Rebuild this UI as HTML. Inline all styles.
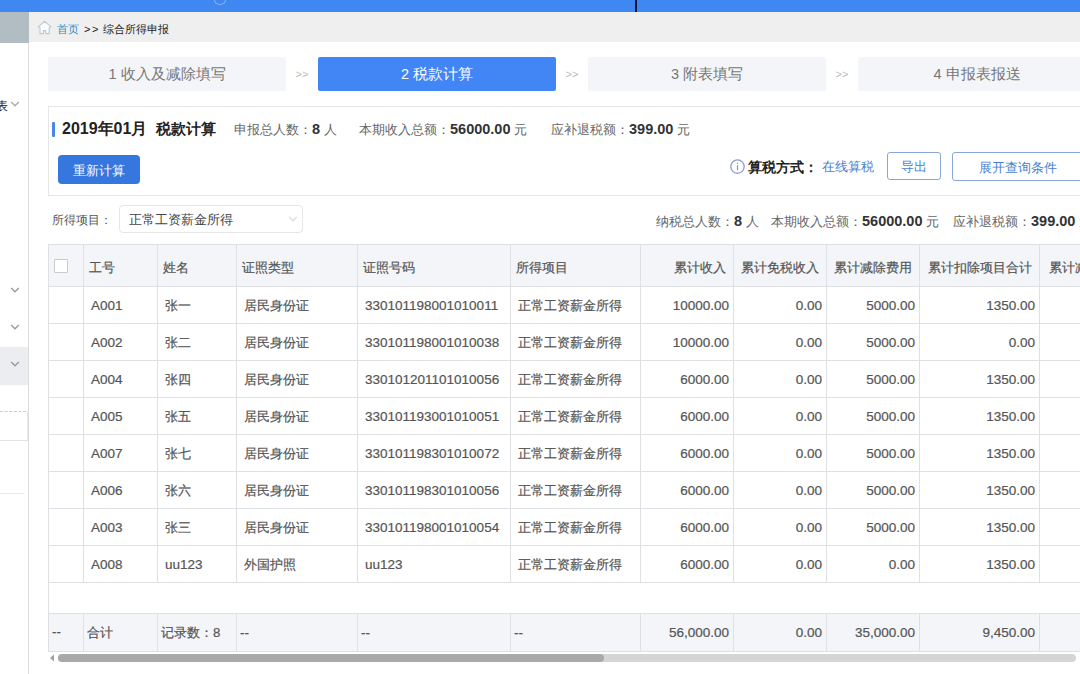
<!DOCTYPE html>
<html><head><meta charset="utf-8">
<style>
*{box-sizing:border-box;margin:0;padding:0}
html,body{width:1080px;height:674px;overflow:hidden;background:#fff;font-family:"Liberation Sans",sans-serif;color:#555}
.a{position:absolute}
.t{position:absolute;white-space:nowrap}
.cell{position:absolute;white-space:nowrap;overflow:hidden;font-size:13.2px;color:#555;-webkit-text-stroke:0.2px #555}
.vl{position:absolute;width:1px;background:#dfe0e3}
.hl{position:absolute;height:1px;background:#dfe0e3}
</style></head><body>

<div class="a" style="left:0;top:0;width:1080px;height:12px;background:#3f87f1"></div>
<div class="a" style="left:635px;top:0;width:2px;height:12px;background:#0a1640"></div>
<div class="a" style="left:214px;top:-5px;width:12px;height:10px;border-radius:50%;border:1.5px solid #cfe0fb;opacity:.5"></div>
<div class="a" style="left:0;top:12px;width:29px;height:31px;background:#b2bdc3"></div>
<div class="a" style="left:29px;top:12px;width:1051px;height:30px;background:#efefef"></div>
<div class="a" style="left:28px;top:43px;width:1px;height:631px;background:#dcdcdc"></div>
<svg class="a" style="left:37px;top:20px" width="15" height="15" viewBox="0 0 15 15"><path d="M7.6 1.3 L14 6.8 L12.2 7.4 V13.6 H8.8 V10.6 H6.4 V13.6 H3 V7.4 L1.2 6.8 Z" fill="#fbfdff" stroke="#bcc7d2" stroke-width="1.1" stroke-linejoin="round"/></svg>
<div class="t" style="left:57px;top:22px;font-size:11px;line-height:14px;color:#2f8cc4">首页</div>
<div class="t" style="left:84px;top:22px;font-size:11px;line-height:14px;color:#222;letter-spacing:1.5px">&gt;&gt;</div>
<div class="t" style="left:103px;top:22px;font-size:11px;line-height:14px;color:#222">综合所得申报</div>
<div class="t" style="left:-4px;top:99px;font-size:12px;line-height:14px;color:#222">表</div>
<svg class="a" style="left:10px;top:101px" width="10" height="6" viewBox="0 0 10 6"><path d="M1.2 1 L5 4.8 L8.8 1" fill="none" stroke="#aaa" stroke-width="1.3"/></svg>
<div class="a" style="left:0;top:347px;width:28px;height:38px;background:#ebedf0"></div>
<svg class="a" style="left:10px;top:287px" width="10" height="6" viewBox="0 0 10 6"><path d="M1.2 1 L5 4.8 L8.8 1" fill="none" stroke="#999" stroke-width="1.3"/></svg>
<svg class="a" style="left:10px;top:324px" width="10" height="6" viewBox="0 0 10 6"><path d="M1.2 1 L5 4.8 L8.8 1" fill="none" stroke="#999" stroke-width="1.3"/></svg>
<svg class="a" style="left:10px;top:361px" width="10" height="6" viewBox="0 0 10 6"><path d="M1.2 1 L5 4.8 L8.8 1" fill="none" stroke="#999" stroke-width="1.3"/></svg>
<div class="a" style="left:0;top:411px;width:26px;height:0;border-top:1px dashed #ccc"></div>
<div class="a" style="left:0;top:440px;width:28px;height:1px;background:#e2e2e2"></div>
<div class="a" style="left:27px;top:411px;width:1px;height:30px;background:#e8e8e8"></div>
<div class="a" style="left:0;top:493px;width:24px;height:1px;background:#e8e8e8"></div>
<div class="t" style="left:48px;top:57px;width:238px;height:34px;background:#f3f5f8;border-radius:2px;color:#777;font-size:14.5px;line-height:34px;text-align:center">1 收入及减除填写</div>
<div class="t" style="left:286px;top:57px;width:32px;height:34px;color:#bbb;font-size:11px;line-height:34px;text-align:center">&gt;&gt;</div>
<div class="t" style="left:318px;top:57px;width:238px;height:34px;background:#4285f4;border-radius:2px;color:#fff;font-size:14.5px;line-height:34px;text-align:center">2 税款计算</div>
<div class="t" style="left:556px;top:57px;width:32px;height:34px;color:#bbb;font-size:11px;line-height:34px;text-align:center">&gt;&gt;</div>
<div class="t" style="left:588px;top:57px;width:238px;height:34px;background:#f3f5f8;border-radius:2px;color:#777;font-size:14.5px;line-height:34px;text-align:center">3 附表填写</div>
<div class="t" style="left:826px;top:57px;width:32px;height:34px;color:#bbb;font-size:11px;line-height:34px;text-align:center">&gt;&gt;</div>
<div class="t" style="left:858px;top:57px;width:238px;height:34px;background:#f3f5f8;border-radius:2px;color:#777;font-size:14.5px;line-height:34px;text-align:center">4 申报表报送</div>
<div class="a" style="left:48px;top:106px;width:1100px;height:90px;border:1px solid #e6e6e6;background:#fff"></div>
<div class="a" style="left:52px;top:122px;width:3px;height:15px;background:#4a86e8;border-radius:1px"></div>
<div class="t" style="left:62px;top:119px;font-size:16px;line-height:20px;font-weight:bold;color:#222">2019年01月<span style="margin-left:9px;font-size:15px">税款计算</span></div>
<div class="t" style="left:234px;top:121px;font-size:13px;line-height:16px;color:#666">申报总人数：<b style="font-size:14.5px;color:#333">8</b> 人</div>
<div class="t" style="left:359px;top:121px;font-size:13px;line-height:16px;color:#666">本期收入总额：<b style="font-size:14.5px;color:#333">56000.00</b> 元</div>
<div class="t" style="left:551px;top:121px;font-size:13px;line-height:16px;color:#666">应补退税额：<b style="font-size:14.5px;color:#333">399.00</b> 元</div>
<div class="t" style="left:58px;top:155px;width:82px;height:29px;background:#3576df;border-radius:4px;color:#fff;font-size:13px;line-height:31px;text-align:center">重新计算</div>
<svg class="a" style="left:730px;top:159px" width="15" height="15" viewBox="0 0 15 15"><circle cx="7.5" cy="7.6" r="6.7" fill="none" stroke="#889dc6" stroke-width="1.3"/><rect x="6.9" y="6.2" width="1.2" height="5" fill="#7f93d0"/><rect x="6.9" y="3.8" width="1.2" height="1.3" fill="#7f93d0"/></svg>
<div class="t" style="left:748px;top:158px;font-size:14px;line-height:18px;font-weight:bold;color:#222">算税方式：</div>
<div class="t" style="left:822px;top:159px;font-size:12.5px;line-height:16px;color:#4a7fd0">在线算税</div>
<div class="t" style="left:887px;top:152px;width:54px;height:28px;border:1px solid #8aa6d8;border-radius:3px;color:#4a7fd0;font-size:13px;line-height:28px;text-align:center">导出</div>
<div class="t" style="left:952px;top:152px;width:160px;height:29px;border:1px solid #8aa6d8;border-radius:3px;color:#4a7fd0;font-size:13px;line-height:29px;padding-left:26px">展开查询条件</div>
<div class="t" style="left:52px;top:212px;font-size:12px;line-height:16px;color:#555">所得项目：</div>
<div class="t" style="left:119px;top:205px;width:184px;height:28px;border:1px solid #e6e6e6;border-radius:4px;color:#444;font-size:13px;line-height:28px;padding-left:9px">正常工资薪金所得</div>
<svg class="a" style="left:288px;top:216px" width="10" height="6" viewBox="0 0 10 6"><path d="M1.2 1 L5 4.8 L8.8 1" fill="none" stroke="#ddd" stroke-width="1.3"/></svg>
<div class="t" style="left:656px;top:213px;font-size:13px;line-height:16px;color:#666">纳税总人数：<b style="font-size:14.5px;color:#333">8</b> 人</div>
<div class="t" style="left:771px;top:213px;font-size:13px;line-height:16px;color:#666">本期收入总额：<b style="font-size:14.5px;color:#333">56000.00</b> 元</div>
<div class="t" style="left:953px;top:213px;font-size:13px;line-height:16px;color:#666">应补退税额：<b style="font-size:14.5px;color:#333">399.00</b> 元</div>
<div class="a" style="left:48px;top:244px;width:1040px;height:42px;background:#f3f5f9"></div>
<div class="a" style="left:48px;top:613px;width:1040px;height:38px;background:#f3f5f9"></div>
<div class="hl" style="left:48px;top:244px;width:1040px"></div>
<div class="hl" style="left:48px;top:286px;width:1040px"></div>
<div class="hl" style="left:48px;top:323px;width:1040px"></div>
<div class="hl" style="left:48px;top:360px;width:1040px"></div>
<div class="hl" style="left:48px;top:397px;width:1040px"></div>
<div class="hl" style="left:48px;top:434px;width:1040px"></div>
<div class="hl" style="left:48px;top:471px;width:1040px"></div>
<div class="hl" style="left:48px;top:508px;width:1040px"></div>
<div class="hl" style="left:48px;top:545px;width:1040px"></div>
<div class="hl" style="left:48px;top:582px;width:1040px"></div>
<div class="hl" style="left:48px;top:613px;width:1040px"></div>
<div class="hl" style="left:48px;top:651px;width:1040px"></div>
<div class="vl" style="left:48px;top:244px;height:338px"></div>
<div class="vl" style="left:48px;top:613px;height:38px"></div>
<div class="vl" style="left:83px;top:244px;height:338px"></div>
<div class="vl" style="left:83px;top:613px;height:38px"></div>
<div class="vl" style="left:157px;top:244px;height:338px"></div>
<div class="vl" style="left:157px;top:613px;height:38px"></div>
<div class="vl" style="left:236px;top:244px;height:338px"></div>
<div class="vl" style="left:236px;top:613px;height:38px"></div>
<div class="vl" style="left:357px;top:244px;height:338px"></div>
<div class="vl" style="left:357px;top:613px;height:38px"></div>
<div class="vl" style="left:510px;top:244px;height:338px"></div>
<div class="vl" style="left:510px;top:613px;height:38px"></div>
<div class="vl" style="left:640px;top:244px;height:338px"></div>
<div class="vl" style="left:640px;top:613px;height:38px"></div>
<div class="vl" style="left:733px;top:244px;height:338px"></div>
<div class="vl" style="left:733px;top:613px;height:38px"></div>
<div class="vl" style="left:826px;top:244px;height:338px"></div>
<div class="vl" style="left:826px;top:613px;height:38px"></div>
<div class="vl" style="left:919px;top:244px;height:338px"></div>
<div class="vl" style="left:919px;top:613px;height:38px"></div>
<div class="vl" style="left:1039px;top:244px;height:338px"></div>
<div class="vl" style="left:1039px;top:613px;height:38px"></div>
<div class="a" style="left:54px;top:259px;width:14px;height:14px;border:1.5px solid #cbcbcb;background:#fff;border-radius:1px"></div>
<div class="cell" style="left:83px;top:247px;width:74px;height:42px;line-height:42px;padding-left:6px;font-size:13.2px">工号</div>
<div class="cell" style="left:157px;top:247px;width:79px;height:42px;line-height:42px;padding-left:6px;font-size:13.2px">姓名</div>
<div class="cell" style="left:236px;top:247px;width:121px;height:42px;line-height:42px;padding-left:6px;font-size:13.2px">证照类型</div>
<div class="cell" style="left:357px;top:247px;width:153px;height:42px;line-height:42px;padding-left:6px;font-size:13.2px">证照号码</div>
<div class="cell" style="left:510px;top:247px;width:130px;height:42px;line-height:42px;padding-left:6px;font-size:13.2px">所得项目</div>
<div class="cell" style="left:640px;top:247px;width:93px;height:42px;line-height:42px;text-align:right;padding-right:7px;font-size:13.2px">累计收入</div>
<div class="cell" style="left:733px;top:247px;width:93px;height:42px;line-height:42px;text-align:right;padding-right:7px;font-size:13.2px">累计免税收入</div>
<div class="cell" style="left:826px;top:247px;width:93px;height:42px;line-height:42px;text-align:right;padding-right:7px;font-size:13.2px">累计减除费用</div>
<div class="cell" style="left:919px;top:247px;width:120px;height:42px;line-height:42px;text-align:right;padding-right:7px;font-size:13.2px">累计扣除项目合计</div>
<div class="cell" style="left:1039px;top:247px;width:121px;height:42px;line-height:42px;padding-left:6px;font-size:13.2px">&nbsp;累计减除</div>
<div class="cell" style="left:83px;top:287px;width:74px;height:37px;line-height:37px;padding-left:8px;font-size:13.5px">A001</div>
<div class="cell" style="left:157px;top:287px;width:79px;height:37px;line-height:37px;padding-left:8px;font-size:13.2px">张一</div>
<div class="cell" style="left:236px;top:287px;width:121px;height:37px;line-height:37px;padding-left:8px;font-size:13.2px">居民身份证</div>
<div class="cell" style="left:357px;top:287px;width:153px;height:37px;line-height:37px;padding-left:8px;font-size:13.5px">330101198001010011</div>
<div class="cell" style="left:510px;top:287px;width:130px;height:37px;line-height:37px;padding-left:8px;font-size:13.2px">正常工资薪金所得</div>
<div class="cell" style="left:640px;top:287px;width:93px;height:37px;line-height:37px;text-align:right;padding-right:4px;font-size:13.5px">10000.00</div>
<div class="cell" style="left:733px;top:287px;width:93px;height:37px;line-height:37px;text-align:right;padding-right:4px;font-size:13.5px">0.00</div>
<div class="cell" style="left:826px;top:287px;width:93px;height:37px;line-height:37px;text-align:right;padding-right:4px;font-size:13.5px">5000.00</div>
<div class="cell" style="left:919px;top:287px;width:120px;height:37px;line-height:37px;text-align:right;padding-right:4px;font-size:13.5px">1350.00</div>
<div class="cell" style="left:83px;top:324px;width:74px;height:37px;line-height:37px;padding-left:8px;font-size:13.5px">A002</div>
<div class="cell" style="left:157px;top:324px;width:79px;height:37px;line-height:37px;padding-left:8px;font-size:13.2px">张二</div>
<div class="cell" style="left:236px;top:324px;width:121px;height:37px;line-height:37px;padding-left:8px;font-size:13.2px">居民身份证</div>
<div class="cell" style="left:357px;top:324px;width:153px;height:37px;line-height:37px;padding-left:8px;font-size:13.5px">330101198001010038</div>
<div class="cell" style="left:510px;top:324px;width:130px;height:37px;line-height:37px;padding-left:8px;font-size:13.2px">正常工资薪金所得</div>
<div class="cell" style="left:640px;top:324px;width:93px;height:37px;line-height:37px;text-align:right;padding-right:4px;font-size:13.5px">10000.00</div>
<div class="cell" style="left:733px;top:324px;width:93px;height:37px;line-height:37px;text-align:right;padding-right:4px;font-size:13.5px">0.00</div>
<div class="cell" style="left:826px;top:324px;width:93px;height:37px;line-height:37px;text-align:right;padding-right:4px;font-size:13.5px">5000.00</div>
<div class="cell" style="left:919px;top:324px;width:120px;height:37px;line-height:37px;text-align:right;padding-right:4px;font-size:13.5px">0.00</div>
<div class="cell" style="left:83px;top:361px;width:74px;height:37px;line-height:37px;padding-left:8px;font-size:13.5px">A004</div>
<div class="cell" style="left:157px;top:361px;width:79px;height:37px;line-height:37px;padding-left:8px;font-size:13.2px">张四</div>
<div class="cell" style="left:236px;top:361px;width:121px;height:37px;line-height:37px;padding-left:8px;font-size:13.2px">居民身份证</div>
<div class="cell" style="left:357px;top:361px;width:153px;height:37px;line-height:37px;padding-left:8px;font-size:13.5px">330101201101010056</div>
<div class="cell" style="left:510px;top:361px;width:130px;height:37px;line-height:37px;padding-left:8px;font-size:13.2px">正常工资薪金所得</div>
<div class="cell" style="left:640px;top:361px;width:93px;height:37px;line-height:37px;text-align:right;padding-right:4px;font-size:13.5px">6000.00</div>
<div class="cell" style="left:733px;top:361px;width:93px;height:37px;line-height:37px;text-align:right;padding-right:4px;font-size:13.5px">0.00</div>
<div class="cell" style="left:826px;top:361px;width:93px;height:37px;line-height:37px;text-align:right;padding-right:4px;font-size:13.5px">5000.00</div>
<div class="cell" style="left:919px;top:361px;width:120px;height:37px;line-height:37px;text-align:right;padding-right:4px;font-size:13.5px">1350.00</div>
<div class="cell" style="left:83px;top:398px;width:74px;height:37px;line-height:37px;padding-left:8px;font-size:13.5px">A005</div>
<div class="cell" style="left:157px;top:398px;width:79px;height:37px;line-height:37px;padding-left:8px;font-size:13.2px">张五</div>
<div class="cell" style="left:236px;top:398px;width:121px;height:37px;line-height:37px;padding-left:8px;font-size:13.2px">居民身份证</div>
<div class="cell" style="left:357px;top:398px;width:153px;height:37px;line-height:37px;padding-left:8px;font-size:13.5px">330101193001010051</div>
<div class="cell" style="left:510px;top:398px;width:130px;height:37px;line-height:37px;padding-left:8px;font-size:13.2px">正常工资薪金所得</div>
<div class="cell" style="left:640px;top:398px;width:93px;height:37px;line-height:37px;text-align:right;padding-right:4px;font-size:13.5px">6000.00</div>
<div class="cell" style="left:733px;top:398px;width:93px;height:37px;line-height:37px;text-align:right;padding-right:4px;font-size:13.5px">0.00</div>
<div class="cell" style="left:826px;top:398px;width:93px;height:37px;line-height:37px;text-align:right;padding-right:4px;font-size:13.5px">5000.00</div>
<div class="cell" style="left:919px;top:398px;width:120px;height:37px;line-height:37px;text-align:right;padding-right:4px;font-size:13.5px">1350.00</div>
<div class="cell" style="left:83px;top:435px;width:74px;height:37px;line-height:37px;padding-left:8px;font-size:13.5px">A007</div>
<div class="cell" style="left:157px;top:435px;width:79px;height:37px;line-height:37px;padding-left:8px;font-size:13.2px">张七</div>
<div class="cell" style="left:236px;top:435px;width:121px;height:37px;line-height:37px;padding-left:8px;font-size:13.2px">居民身份证</div>
<div class="cell" style="left:357px;top:435px;width:153px;height:37px;line-height:37px;padding-left:8px;font-size:13.5px">330101198301010072</div>
<div class="cell" style="left:510px;top:435px;width:130px;height:37px;line-height:37px;padding-left:8px;font-size:13.2px">正常工资薪金所得</div>
<div class="cell" style="left:640px;top:435px;width:93px;height:37px;line-height:37px;text-align:right;padding-right:4px;font-size:13.5px">6000.00</div>
<div class="cell" style="left:733px;top:435px;width:93px;height:37px;line-height:37px;text-align:right;padding-right:4px;font-size:13.5px">0.00</div>
<div class="cell" style="left:826px;top:435px;width:93px;height:37px;line-height:37px;text-align:right;padding-right:4px;font-size:13.5px">5000.00</div>
<div class="cell" style="left:919px;top:435px;width:120px;height:37px;line-height:37px;text-align:right;padding-right:4px;font-size:13.5px">1350.00</div>
<div class="cell" style="left:83px;top:472px;width:74px;height:37px;line-height:37px;padding-left:8px;font-size:13.5px">A006</div>
<div class="cell" style="left:157px;top:472px;width:79px;height:37px;line-height:37px;padding-left:8px;font-size:13.2px">张六</div>
<div class="cell" style="left:236px;top:472px;width:121px;height:37px;line-height:37px;padding-left:8px;font-size:13.2px">居民身份证</div>
<div class="cell" style="left:357px;top:472px;width:153px;height:37px;line-height:37px;padding-left:8px;font-size:13.5px">330101198301010056</div>
<div class="cell" style="left:510px;top:472px;width:130px;height:37px;line-height:37px;padding-left:8px;font-size:13.2px">正常工资薪金所得</div>
<div class="cell" style="left:640px;top:472px;width:93px;height:37px;line-height:37px;text-align:right;padding-right:4px;font-size:13.5px">6000.00</div>
<div class="cell" style="left:733px;top:472px;width:93px;height:37px;line-height:37px;text-align:right;padding-right:4px;font-size:13.5px">0.00</div>
<div class="cell" style="left:826px;top:472px;width:93px;height:37px;line-height:37px;text-align:right;padding-right:4px;font-size:13.5px">5000.00</div>
<div class="cell" style="left:919px;top:472px;width:120px;height:37px;line-height:37px;text-align:right;padding-right:4px;font-size:13.5px">1350.00</div>
<div class="cell" style="left:83px;top:509px;width:74px;height:37px;line-height:37px;padding-left:8px;font-size:13.5px">A003</div>
<div class="cell" style="left:157px;top:509px;width:79px;height:37px;line-height:37px;padding-left:8px;font-size:13.2px">张三</div>
<div class="cell" style="left:236px;top:509px;width:121px;height:37px;line-height:37px;padding-left:8px;font-size:13.2px">居民身份证</div>
<div class="cell" style="left:357px;top:509px;width:153px;height:37px;line-height:37px;padding-left:8px;font-size:13.5px">330101198001010054</div>
<div class="cell" style="left:510px;top:509px;width:130px;height:37px;line-height:37px;padding-left:8px;font-size:13.2px">正常工资薪金所得</div>
<div class="cell" style="left:640px;top:509px;width:93px;height:37px;line-height:37px;text-align:right;padding-right:4px;font-size:13.5px">6000.00</div>
<div class="cell" style="left:733px;top:509px;width:93px;height:37px;line-height:37px;text-align:right;padding-right:4px;font-size:13.5px">0.00</div>
<div class="cell" style="left:826px;top:509px;width:93px;height:37px;line-height:37px;text-align:right;padding-right:4px;font-size:13.5px">5000.00</div>
<div class="cell" style="left:919px;top:509px;width:120px;height:37px;line-height:37px;text-align:right;padding-right:4px;font-size:13.5px">1350.00</div>
<div class="cell" style="left:83px;top:546px;width:74px;height:37px;line-height:37px;padding-left:8px;font-size:13.5px">A008</div>
<div class="cell" style="left:157px;top:546px;width:79px;height:37px;line-height:37px;padding-left:8px;font-size:13.5px">uu123</div>
<div class="cell" style="left:236px;top:546px;width:121px;height:37px;line-height:37px;padding-left:8px;font-size:13.2px">外国护照</div>
<div class="cell" style="left:357px;top:546px;width:153px;height:37px;line-height:37px;padding-left:8px;font-size:13.5px">uu123</div>
<div class="cell" style="left:510px;top:546px;width:130px;height:37px;line-height:37px;padding-left:8px;font-size:13.2px">正常工资薪金所得</div>
<div class="cell" style="left:640px;top:546px;width:93px;height:37px;line-height:37px;text-align:right;padding-right:4px;font-size:13.5px">6000.00</div>
<div class="cell" style="left:733px;top:546px;width:93px;height:37px;line-height:37px;text-align:right;padding-right:4px;font-size:13.5px">0.00</div>
<div class="cell" style="left:826px;top:546px;width:93px;height:37px;line-height:37px;text-align:right;padding-right:4px;font-size:13.5px">0.00</div>
<div class="cell" style="left:919px;top:546px;width:120px;height:37px;line-height:37px;text-align:right;padding-right:4px;font-size:13.5px">1350.00</div>
<div class="cell" style="left:52px;top:613px;height:38px;line-height:38px">--</div>
<div class="cell" style="left:83px;top:614px;width:74px;height:38px;line-height:38px;padding-left:4px;font-size:13.2px">合计</div>
<div class="cell" style="left:157px;top:614px;width:79px;height:38px;line-height:38px;padding-left:4px;font-size:13.2px">记录数：8</div>
<div class="cell" style="left:236px;top:614px;width:121px;height:38px;line-height:38px;padding-left:4px;font-size:13.5px">--</div>
<div class="cell" style="left:357px;top:614px;width:153px;height:38px;line-height:38px;padding-left:4px;font-size:13.5px">--</div>
<div class="cell" style="left:510px;top:614px;width:130px;height:38px;line-height:38px;padding-left:4px;font-size:13.5px">--</div>
<div class="cell" style="left:640px;top:614px;width:93px;height:38px;line-height:38px;text-align:right;padding-right:4px;font-size:13.5px">56,000.00</div>
<div class="cell" style="left:733px;top:614px;width:93px;height:38px;line-height:38px;text-align:right;padding-right:4px;font-size:13.5px">0.00</div>
<div class="cell" style="left:826px;top:614px;width:93px;height:38px;line-height:38px;text-align:right;padding-right:4px;font-size:13.5px">35,000.00</div>
<div class="cell" style="left:919px;top:614px;width:120px;height:38px;line-height:38px;text-align:right;padding-right:4px;font-size:13.5px">9,450.00</div>
<div class="vl" style="left:48px;top:582px;height:31px"></div>
<div class="a" style="left:48px;top:652px;width:1032px;height:11px;background:#fff"></div>
<svg class="a" style="left:49px;top:654px" width="6" height="8" viewBox="0 0 6 8"><path d="M5 0.5 L1 4 L5 7.5 Z" fill="#a0a0a0"/></svg>
<div class="a" style="left:58px;top:654px;width:1018px;height:8px;background:#d5d5d5;border-radius:4px"></div>
<div class="a" style="left:58px;top:654px;width:546px;height:8px;background:#a9a9a9;border-radius:4px"></div>
</body></html>
